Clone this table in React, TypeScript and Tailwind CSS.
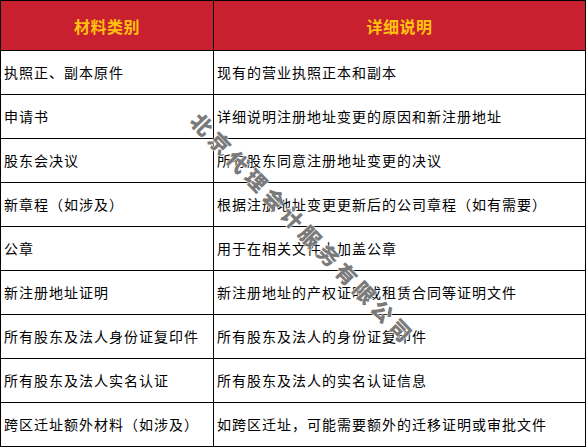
const rows: [string, string][] = [
  ["执照正、副本原件", "现有的营业执照正本和副本"],
  ["申请书", "详细说明注册地址变更的原因和新注册地址"],
  ["股东会决议", "所有股东同意注册地址变更的决议"],
  ["新章程（如涉及）", "根据注册地址变更更新后的公司章程（如有需要）"],
  ["公章", "用于在相关文件上加盖公章"],
  ["新注册地址证明", "新注册地址的产权证明或租赁合同等证明文件"],
  ["所有股东及法人身份证复印件", "所有股东及法人的身份证复印件"],
  ["所有股东及法人实名认证", "所有股东及法人的实名认证信息"],
  ["跨区迁址额外材料（如涉及）", "如跨区迁址，可能需要额外的迁移证明或审批文件"],
]

export default function App() {
  return (
    <div className="relative w-[587px] h-[447px] bg-white overflow-hidden font-['Noto_Sans_CJK_SC',sans-serif]">
      <div className="w-[586px] border border-black">
        <div className="grid grid-cols-[213px_1fr] h-[49px] bg-[#c8202f] text-[#ffc20e] text-[16px] font-bold tracking-[0.5px]">
          <div className="flex items-center justify-center border-r border-black">材料类别</div>
          <div className="flex items-center justify-center">详细说明</div>
        </div>
        {rows.map(([a, b]) => (
          <div key={a} className="grid grid-cols-[213px_1fr] h-[44px] border-t border-black text-[14px] tracking-[1px] text-black">
            <div className="flex items-center pl-[3px] border-r border-black whitespace-nowrap">{a}</div>
            <div className="flex items-center pl-[3px] whitespace-nowrap">{b}</div>
          </div>
        ))}
      </div>
      {/* watermark */}
      <div className="absolute left-[303px] top-[229px] -translate-x-1/2 -translate-y-1/2 rotate-[46deg] whitespace-nowrap text-[21px] font-black tracking-[5px] text-[#7a7a7a] [text-shadow:0_0_2px_#fff,0_0_1px_#fff,0_0_1px_#fff] pointer-events-none">
        北京代理会计服务有限公司
      </div>
    </div>
  )
}
